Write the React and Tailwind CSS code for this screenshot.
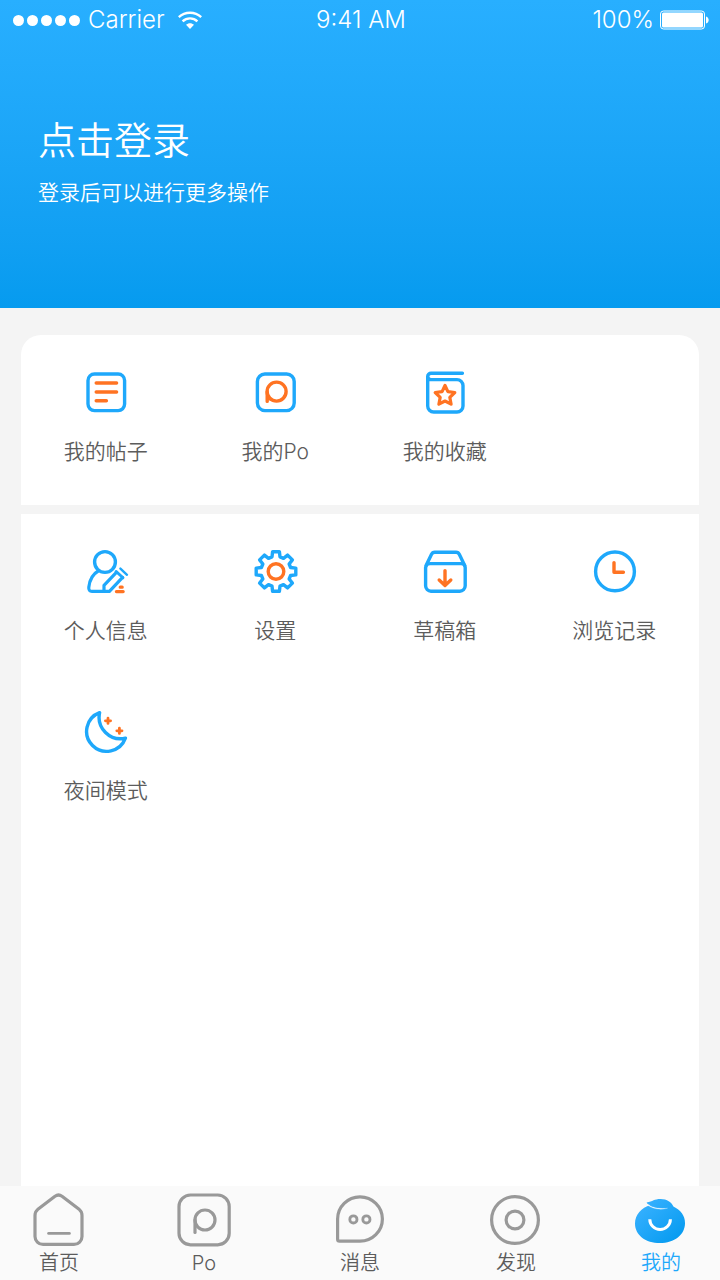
import React, { useState } from "react";

const BLUE = "#1ea8fb";
const ORANGE = "#ff7322";

// Outline of the settings gear, eight teeth around the center
const gearPath = (() => {
  const tooth = [
    [-4, -14.6],
    [-3.4, -19.8],
    [3.4, -19.8],
    [4, -14.6],
  ];
  const points = [];
  for (let i = 0; i < 8; i++) {
    const a = (i * Math.PI) / 4;
    tooth.forEach(([x, y]) => {
      const px = 25 + x * Math.cos(a) - y * Math.sin(a);
      const py = 24.5 + x * Math.sin(a) + y * Math.cos(a);
      points.push(`${px.toFixed(2)} ${py.toFixed(2)}`);
    });
  }
  return `M${points.join("L")}Z`;
})();

// Shared wrapper for the menu icons
const MenuIcon = ({ children }) => (
  <svg
    viewBox="0 0 48 48"
    className="w-12 h-12"
    fill="none"
    stroke={BLUE}
    strokeWidth="3.4"
    strokeLinecap="round"
    strokeLinejoin="round"
    aria-hidden="true"
  >
    {children}
  </svg>
);

const PostsIcon = () => (
  <MenuIcon>
    <rect x="6" y="6" width="36.6" height="36.6" rx="6.5" />
    <path d="M14.2 15H34.6M14.2 24H34.6M14.2 32.7H24.4" stroke={ORANGE} />
  </MenuIcon>
);

const PoIcon = () => (
  <MenuIcon>
    <rect x="6.4" y="6" width="36.8" height="36.6" rx="7.5" />
    <g stroke={ORANGE}>
      <circle cx="25.6" cy="23.6" r="9.5" />
      <path d="M16.2 24V33.4M16.6 29.6L19.4 31" />
    </g>
  </MenuIcon>
);

const FavoritesIcon = () => (
  <MenuIcon>
    <path d="M41.4 5.2H10a3.3 3.3 0 0 0-3.3 3.3V38a6 6 0 0 0 6 6H36a6 6 0 0 0 6-6V17.6a6 6 0 0 0-6-6H10a3.2 3.2 0 0 1-3.2-3" />
    <path
      d="M24 17.4L26.9 23.6L33.8 24.5L28.8 29.3L30.1 36.2L24 33L17.9 36.2L19.2 29.3L14.2 24.5L21.1 23.6Z"
      stroke={ORANGE}
      strokeWidth="3.2"
    />
  </MenuIcon>
);

const ProfileIcon = () => (
  <MenuIcon>
    <circle cx="23" cy="15" r="10.4" />
    <path d="M16.2 24C11 27 7.6 33 6.8 40.2C6.5 43 7.6 44.4 10 44.4H27.4L40.6 30.4" strokeWidth="3.2" />
    <path d="M34.4 25.4L22 38.4V44.2" strokeWidth="3.2" />
    <path d="M34 24.4L41 30.8" strokeWidth="2.8" />
    <path d="M38.4 21.6L45 27.8" strokeWidth="2.4" />
    <path d="M38.2 40.2H40.2M34.4 44.6H41.2" stroke={ORANGE} strokeWidth="3.2" />
  </MenuIcon>
);

const SettingsIcon = () => (
  <MenuIcon>
    <path d={gearPath} />
    <circle cx="25" cy="24.5" r="7.8" stroke={ORANGE} />
  </MenuIcon>
);

const DraftsIcon = () => (
  <MenuIcon>
    <path d="M9 16.6H40.2a4 4 0 0 1 4 4V38.8a5.4 5.4 0 0 1-5.4 5.4H10a5.4 5.4 0 0 1-5.4-5.4V20.6a4.4 4.4 0 0 1 4.4-4Z" />
    <path d="M5.2 18.2L10.4 7.6Q11.4 5.2 13.8 5.2H35Q37.4 5.2 38.4 7.6L43.6 18.2" />
    <path d="M24 23.6V38M18.2 33L24 38.4L29.8 33" stroke={ORANGE} />
  </MenuIcon>
);

const HistoryIcon = () => (
  <MenuIcon>
    <circle cx="25" cy="24.4" r="19.4" />
    <path d="M24 15.6V25.3H33.4" stroke={ORANGE} />
  </MenuIcon>
);

const NightIcon = () => (
  <MenuIcon>
    <path d="M17.6 5.6A20 20 0 1 0 43.4 31.2A21.6 21.6 0 0 1 17.6 5.6Z" />
    <path
      d="M26 11.2V16.4M23.4 13.8H28.6M37.4 21.2V26.4M34.8 23.8H40"
      stroke={ORANGE}
      strokeWidth="2.8"
    />
  </MenuIcon>
);

// Shared wrapper for the tab bar icons
const TabIcon = ({ children }) => (
  <svg
    viewBox="0 0 56 56"
    className="w-14 h-14"
    fill="none"
    stroke="#999999"
    strokeWidth="3.2"
    strokeLinecap="round"
    strokeLinejoin="round"
    aria-hidden="true"
  >
    {children}
  </svg>
);

const HomeTabIcon = () => (
  <TabIcon>
    <path d="M24 4.2Q27.5 1.8 31 4.2L48.4 17.6Q51 19.8 51 23.4V44.4a8 8 0 0 1-8 8H12a8 8 0 0 1-8-8V23.4Q4 19.8 6.6 17.6Z" />
    <path d="M17.6 41.4H38.4" strokeWidth="2.8" />
  </TabIcon>
);

const PoTabIcon = () => (
  <TabIcon>
    <rect x="3" y="3" width="50.2" height="49.8" rx="11.5" />
    <circle cx="29" cy="28" r="10" />
    <path d="M19 28V40.4" />
  </TabIcon>
);

const MessageTabIcon = () => (
  <TabIcon>
    <path d="M28 49.2H7.6a2 2 0 0 1-2-2V27A22.4 22.2 0 1 1 28 49.2Z" />
    <circle cx="21.4" cy="27.4" r="3.6" strokeWidth="2.8" />
    <circle cx="34.4" cy="27.4" r="3.6" strokeWidth="2.8" />
  </TabIcon>
);

const DiscoverTabIcon = () => (
  <TabIcon>
    <circle cx="27" cy="28" r="23.4" />
    <circle cx="27" cy="28" r="8.9" />
  </TabIcon>
);

const MineTabIcon = () => (
  <TabIcon>
    <defs>
      <linearGradient id="mine" x1="0" y1="0" x2="1" y2="1">
        <stop offset="0.1" stopColor="#38b1ff" />
        <stop offset="0.9" stopColor="#069bf0" />
      </linearGradient>
    </defs>
    <path
      d="M13.6 10.4C20 9.4 21 7 27.6 7C34 7 38.6 10.2 40.4 14.6C47.6 18 52 24 52 31C52 43 41.4 51 27 51C12.6 51 2 43 2 31.4C2 22.6 8.4 15.6 17.4 13.2C15.6 12.6 14.2 11.8 13.6 10.4Z"
      fill="url(#mine)"
      stroke="none"
    />
    <path d="M16 13.2C21 16.2 28 17 34.6 16.2C28 18 20.6 17.2 15 13.6Z" fill="#fff" stroke="#fff" strokeWidth="0.2" />
    <path d="M16.8 27.2a10.3 10.3 0 0 0 20.6 0" stroke="#fff" strokeWidth="3" strokeLinecap="butt" />
  </TabIcon>
);

const myContent = [
  { label: "我的帖子", icon: PostsIcon },
  { label: "我的Po", icon: PoIcon },
  { label: "我的收藏", icon: FavoritesIcon },
];

const tools = [
  { label: "个人信息", icon: ProfileIcon },
  { label: "设置", icon: SettingsIcon },
  { label: "草稿箱", icon: DraftsIcon },
  { label: "浏览记录", icon: HistoryIcon },
  { label: "夜间模式", icon: NightIcon },
];

const tabs = [
  { id: "home", label: "首页", icon: HomeTabIcon },
  { id: "po", label: "Po", icon: PoTabIcon },
  { id: "message", label: "消息", icon: MessageTabIcon },
  { id: "discover", label: "发现", icon: DiscoverTabIcon },
  { id: "mine", label: "我的", icon: MineTabIcon },
];

const StatusBar = () => (
  <div className="grid grid-cols-3 items-center h-10 pl-[13px] pr-[11px] text-2xl font-light">
    <div className="flex items-center">
      <div className="flex gap-[3px]">
        {[0, 1, 2, 3, 4].map((dot) => (
          <span key={dot} className="w-[11px] h-[11px] rounded-full bg-white" />
        ))}
      </div>
      <span className="ml-2">Carrier</span>
      <svg viewBox="0 0 24 18" className="ml-[13px] w-6 h-[18px]" fill="none" stroke="#fff" strokeWidth="2.4" aria-hidden="true">
        <path d="M0.8 6.2C7 0.2 17 0.2 23.2 6.2" />
        <path d="M4.6 10.4C8.8 6.4 15.2 6.4 19.4 10.4" />
        <path d="M8 13.8C10.2 11.6 13.8 11.6 16 13.8L12 18Z" fill="#fff" stroke="none" />
      </svg>
    </div>
    <span className="text-center">9:41 AM</span>
    <div className="flex items-center justify-end">
      <span>100%</span>
      <svg viewBox="0 0 49 20" className="ml-[6px] w-[49px] h-5" aria-hidden="true">
        <rect x="0.5" y="1" width="44" height="18" rx="3" fill="none" stroke="#fff" />
        <rect x="2" y="2.5" width="41" height="15" rx="1.5" fill="#fff" />
        <path d="M46 6.5C49.6 7.5 49.6 12.5 46 13.5Z" fill="#fff" />
      </svg>
    </div>
  </div>
);

const MenuGrid = ({ items }) => (
  <div className="grid grid-cols-4 gap-y-[61px]">
    {items.map(({ label, icon: Icon }) => (
      <button key={label} type="button" className="flex flex-col items-center gap-[21px] cursor-pointer">
        <Icon />
        <span className="text-[21px] leading-[30px] font-[350] text-[#5c5c5c]">{label}</span>
      </button>
    ))}
  </div>
);

const App = () => {
  const [activeTab, setActiveTab] = useState("mine");

  return (
    <div className="flex flex-col min-h-screen bg-[#f4f4f4] font-[Inter,'Noto_Sans_CJK_SC',sans-serif]">
      {/* Header with login prompt */}
      <header className="bg-linear-to-b from-[#28afff] to-[#069bef] text-white pb-[100px]">
        <StatusBar />
        <button type="button" className="block mt-[76px] ml-[38px] text-left cursor-pointer">
          <span className="block text-[38px] leading-[48px] font-[350]">点击登录</span>
          <span className="block mt-[14px] text-[21px] leading-[30px] font-[350]">登录后可以进行更多操作</span>
        </button>
      </header>

      {/* Menu cards */}
      <main className="flex flex-col flex-1 gap-[9px] px-[21px] pt-[27px]">
        <section className="bg-white rounded-t-[20px] pt-[33px] pb-[38px]">
          <MenuGrid items={myContent} />
        </section>
        <section className="flex-1 bg-white pt-[33px] pb-10">
          <MenuGrid items={tools} />
        </section>
      </main>

      {/* Bottom tab bar */}
      <nav className="sticky bottom-0 grid grid-cols-[118px_1fr_1fr_1fr_118px] gap-4 bg-[#fafafa] pt-[6px] pb-[3px]">
        {tabs.map(({ id, label, icon: Icon }) => (
          <a
            key={id}
            href={`#${id}`}
            onClick={() => setActiveTab(id)}
            className={`flex flex-col items-center gap-px text-xl font-[350] ${
              activeTab === id ? "text-[#1ea8fb]" : "text-[#5c5c5c]"
            }`}
          >
            <Icon />
            <span className="leading-7">{label}</span>
          </a>
        ))}
      </nav>
    </div>
  );
};

export default App;
